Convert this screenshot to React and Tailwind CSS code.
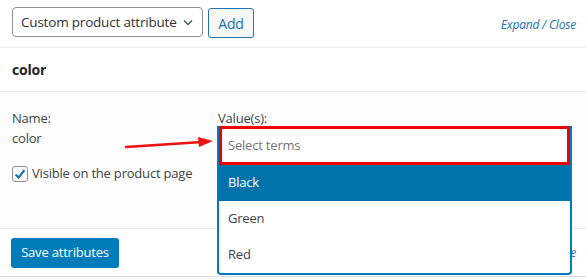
import React from 'react';

const terms = ['Black', 'Green', 'Red'];

const App = () => (
  <div className="relative h-[279px] w-[586px] overflow-hidden whitespace-nowrap bg-white font-['Open_Sans',sans-serif] text-[13px] tracking-[-0.2px] text-[#3c434a]">
    {/* toolbar */}
    <div className="flex h-[48px] items-start border-b border-[#eeeeee] pl-[12px] pt-[7px]">
      <div className="flex h-[30px] w-[191px] items-center justify-between rounded-[4px] border border-[#8c8f94] bg-white pl-[8px] pr-[8px] text-[13.5px] text-[#2c3338]">
        <span>Custom product attribute</span>
        <svg width="12" height="12" viewBox="0 0 12 12" fill="none" stroke="#50575e" strokeWidth="1.5">
          <path d="M2 4.5l4 4 4-4" />
        </svg>
      </div>
      <button className="ml-[5px] mt-[1px] h-[30px] w-[46px] rounded-[3px] border border-[#2271b1] bg-[#f6f7f7] text-[14px] text-[#2271b1]">
        Add
      </button>
      <span className="ml-auto mr-[10px] mt-[9px] text-[12px] italic text-[#2271b1]">Expand / Close</span>
    </div>

    {/* attribute heading */}
    <div className="flex h-[44px] items-center border-b border-[#eeeeee] px-[12px] text-[14px] font-bold text-[#1d2327]">color</div>

    {/* attribute body */}
    <div className="flex h-[136px] bg-[#fdfdfd] pt-[16px]">
      <div className="w-[218px] pl-[12px]">
        <div className="leading-[20px]">Name:</div>
        <div className="leading-[20px]">color</div>
        <label className="mt-[16px] flex items-center gap-[4px]">
          <span className="flex h-[16px] w-[16px] items-center justify-center rounded-[3px] border border-[#8c8f94] bg-white">
            <svg width="14" height="14" viewBox="0 0 14 14" fill="none" stroke="#2271b1" strokeWidth="2.2">
              <path d="M2.5 7.5l3 3 6-7.5" />
            </svg>
          </span>
          <span>Visible on the product page</span>
        </label>
      </div>
      <div className="flex-1">
        <div className="leading-[20px]">Value(s):</div>
      </div>
    </div>

    {/* footer */}
    <div className="flex h-[49px] items-center justify-between border-b border-t border-[#dcdcde] border-t-[#eeeeee] pl-[11px] pr-[10px]">
      <button className="h-[30px] w-[108px] rounded-[3px] bg-[#007cba] text-white">Save attributes</button>
      <span className="text-[12px] italic text-[#2271b1]">Expand / Close</span>
    </div>

    {/* red arrow annotation */}
    <svg className="absolute left-[124px] top-[136px]" width="92" height="14" viewBox="0 0 92 14">
      <path d="M2 11L78 6" stroke="#ee1111" strokeWidth="2.4" strokeLinecap="round" />
      <path d="M74 1L89 5L75 11Z" fill="#ee1111" />
    </svg>

    {/* open terms dropdown */}
    <div className="absolute left-[217px] top-[126px] w-[355px] overflow-hidden rounded-b-[4px] border-2 border-t-0 border-[#007cba] bg-white">
      <div className="flex h-[39px] items-center border-[3px] border-[#ee0000] bg-white pl-[6px] text-[#757575]">
        Select terms
      </div>
      {terms.map((t, i) => (
        <div
          key={t}
          className={`flex h-[36px] items-center pl-[9px] ${i === 0 ? 'bg-[#0073aa] text-white' : 'text-[#3c434a]'}`}
        >
          {t}
        </div>
      ))}
    </div>
  </div>
);

export default App;
